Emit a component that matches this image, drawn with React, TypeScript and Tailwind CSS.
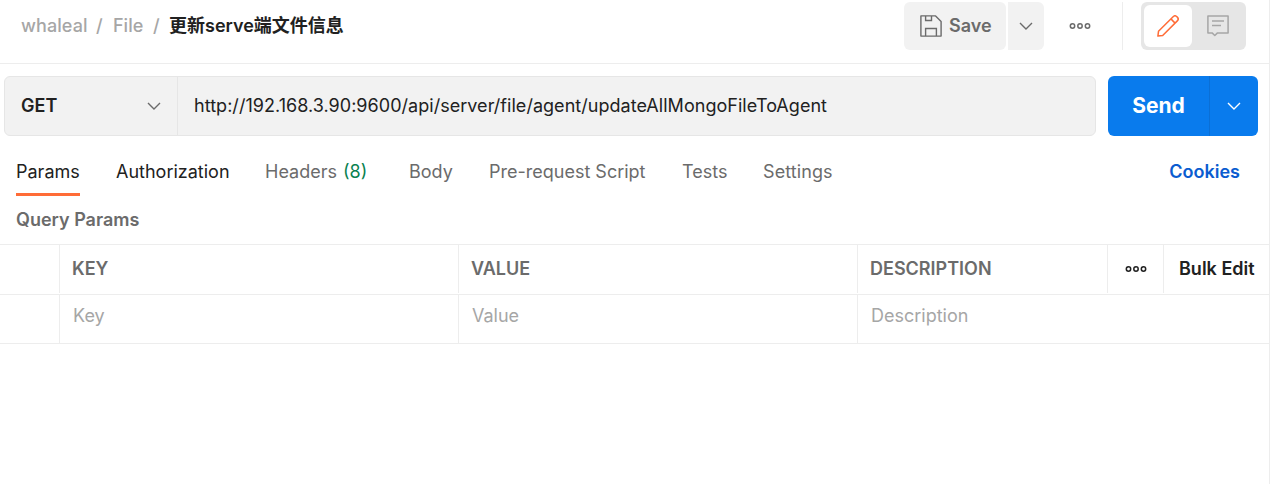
import React from "react";

const ChevronDown = ({ className }: { className: string }) => (
  <svg width="14" height="8" viewBox="0 0 14 8" fill="none" className={className}>
    <path d="M1 0.9 L7 6.9 L13 0.9" stroke="currentColor" strokeWidth="1.4" />
  </svg>
);

const Dots = ({ className }: { className: string }) => (
  <svg width="22" height="8" viewBox="0 0 22 8" fill="none" className={className}>
    <g stroke="currentColor" strokeWidth="1.5">
      <circle cx="3.5" cy="4" r="2.2" />
      <circle cx="11" cy="4" r="2.2" />
      <circle cx="18.5" cy="4" r="2.2" />
    </g>
  </svg>
);

const SaveIcon = () => (
  <svg width="22" height="22" viewBox="0 0 22 22" fill="none" stroke="#6b6b6b" strokeWidth="1.4">
    <path d="M0.9 0.9 H15.6 L21.1 6.4 V21.1 H0.9 Z" strokeLinejoin="round" />
    <path d="M5.6 1 V5.5 H11.5 V1" />
    <path d="M5.6 21 V13.5 H16.4 V21" />
  </svg>
);

const PencilIcon = () => (
  <svg width="22" height="22" viewBox="0 0 22 22" fill="none" stroke="#ff6c37" strokeWidth="1.5" strokeLinejoin="round">
    <path d="M0.9 21.1 L1.5 16.3 L16.1 1.7 C17.2 0.6 18.8 0.6 19.9 1.7 L20.3 2.1 C21.4 3.2 21.4 4.8 20.3 5.9 L5.7 20.5 Z" />
    <path d="M13.9 3.9 L18.1 8.1" />
  </svg>
);

const CommentIcon = () => (
  <svg width="22" height="22" viewBox="0 0 22 22" fill="none" stroke="#a6a6a6" strokeWidth="1.5">
    <path d="M0.9 0.9 H21.1 V17.9 H10.5 L7.8 20.5 L5.1 17.9 H0.9 Z" strokeLinejoin="round" />
    <path d="M5 6 H17 M5 10.6 H14" />
  </svg>
);

export default function App() {
  return (
    <div className="h-[484px] w-[1276px] overflow-hidden bg-white font-['Inter','Noto_Sans_CJK_SC',sans-serif] text-[18px] leading-6 whitespace-nowrap text-[#212121]">
      <div className="h-full w-[1270px] border-r border-[#ededed]">
        <header className="flex h-16 justify-between border-b border-[#ededed] pt-0.5 pr-[23px] pl-[21px]">
          <nav className="flex h-12 items-center font-medium text-[#a6a6a6]">
            <span className="w-[75px] tracking-[0.08px]">whaleal</span>
            <span className="w-[17px]">/</span>
            <span className="w-10">File</span>
            <span className="w-4">/</span>
            <span className="font-semibold text-[#212121]">更新serve端文件信息</span>
          </nav>
          <div className="flex h-12 items-center">
            <button className="flex h-12 w-[102px] items-center gap-[7px] rounded-md bg-[#f2f2f2] pl-4 font-semibold text-[#6b6b6b]">
              <SaveIcon />
              Save
            </button>
            <button className="ml-0.5 flex h-12 w-9 items-center justify-center rounded-r-md bg-[#f2f2f2]">
              <ChevronDown className="text-[#6b6b6b]" />
            </button>
            <button className="ml-[25px]">
              <Dots className="text-[#6b6b6b]" />
            </button>
            <div className="ml-[31px] h-12 w-px bg-[#ededed]" />
            <div className="ml-[18px] flex h-12 w-[105px] rounded-md bg-[#e6e6e6] p-[3px]">
              <button className="flex h-[42px] w-12 items-center justify-center rounded-md bg-white">
                <PencilIcon />
              </button>
              <button className="flex h-[42px] w-[51px] items-center justify-center">
                <CommentIcon />
              </button>
            </div>
          </div>
        </header>

        <section className="mt-3 flex h-[60px] gap-3 pl-1">
          <div className="flex w-[1092px] rounded-md border border-[#e6e6e6] bg-[#f2f2f2]">
            <button className="flex w-[173px] items-center justify-between border-r border-[#e6e6e6] pr-4 pl-4 font-semibold">
              GET
              <ChevronDown className="text-[#6b6b6b]" />
            </button>
            <div className="flex items-center pl-4 tracking-[0.035px]">
              http://192.168.3.90:9600/api/server/file/agent/updateAllMongoFileToAgent
            </div>
          </div>
          <div className="flex w-[150px] overflow-hidden rounded-md bg-[#097bed] text-white">
            <button className="flex w-[102px] items-center justify-center border-r border-[#0a6fd6] text-[21px] font-bold">
              Send
            </button>
            <button className="flex w-12 items-center justify-center">
              <ChevronDown className="text-white" />
            </button>
          </div>
        </section>

        <div className="flex h-[60px] items-start justify-between pr-[29px] pl-4 text-[#6b6b6b]">
          <div className="flex">
            <div className="mr-9 h-[60px] w-16 border-b-[3px] border-[#ff6c37] pt-6 text-[#212121]">Params</div>
            <div className="w-[149px] pt-6 text-[#212121]">Authorization</div>
            <div className="w-36 pt-6">
              Headers <span className="ml-px text-[#0a8150]">(8)</span>
            </div>
            <div className="w-20 pt-6">Body</div>
            <div className="w-[193px] pt-6">Pre-request Script</div>
            <div className="w-[81px] pt-6">Tests</div>
            <div className="pt-6 tracking-[0.1px]">Settings</div>
          </div>
          <div className="pt-6 font-semibold text-[#0b5cd0]">Cookies</div>
        </div>

        <h2 className="h-12 pt-3 pl-4 font-semibold text-[#6b6b6b]">Query Params</h2>

        <div className="border-y border-[#ededed]">
          <div className="flex h-[50px] border-b border-[#ededed] pb-px font-semibold text-[#6b6b6b]">
            <div className="w-[60px] border-r border-[#ededed]" />
            <div className="flex w-[399px] items-center border-r border-[#ededed] pl-3">KEY</div>
            <div className="flex w-[399px] items-center border-r border-[#ededed] pl-3">VALUE</div>
            <div className="flex w-[250px] items-center border-r border-[#ededed] pl-3">DESCRIPTION</div>
            <div className="flex w-14 items-center justify-center border-r border-[#ededed]">
              <Dots className="text-[#212121]" />
            </div>
            <div className="flex items-center pl-[15px] text-[#212121]">Bulk Edit</div>
          </div>
          <div className="flex h-12 text-[#a6a6a6]">
            <div className="w-[60px] border-r border-[#ededed]" />
            <div className="w-[399px] border-r border-[#ededed] pt-[9px] pl-[13px]">Key</div>
            <div className="w-[399px] border-r border-[#ededed] pt-[9px] pl-[13px]">Value</div>
            <div className="pt-[9px] pl-[13px]">Description</div>
          </div>
        </div>
      </div>
    </div>
  );
}
